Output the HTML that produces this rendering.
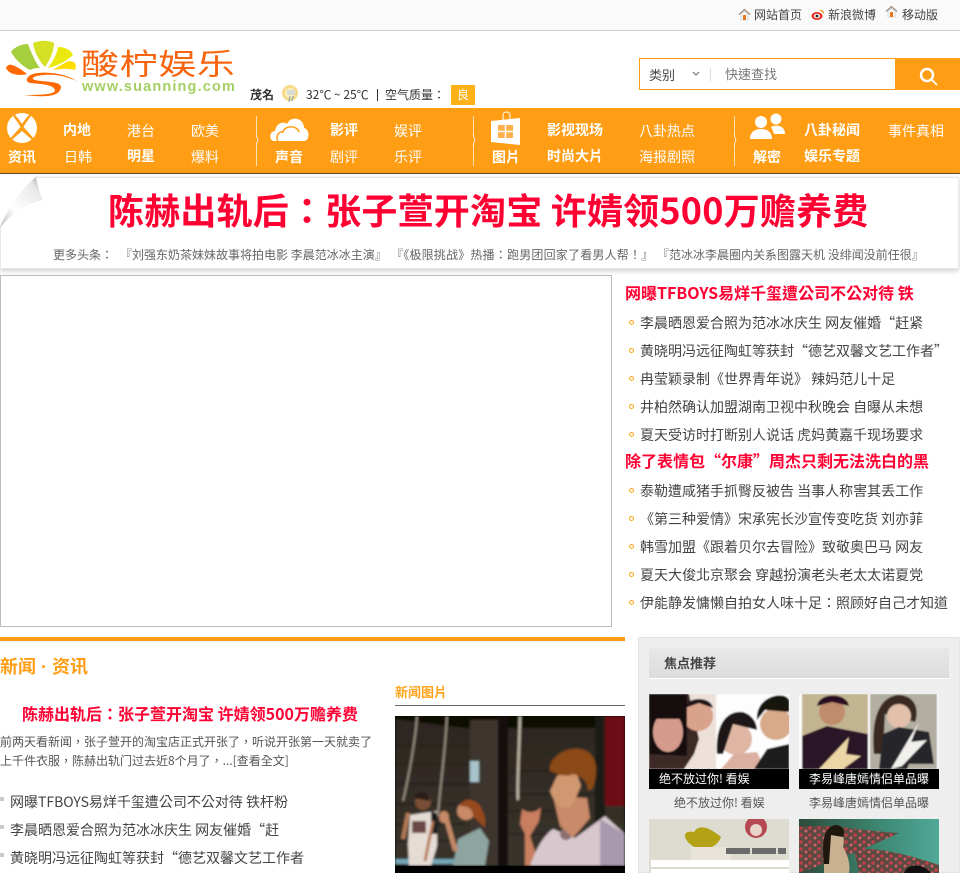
<!DOCTYPE html>
<html lang="zh-Hant"><head><meta charset="utf-8"><title>酸柠娱乐</title>
<style>
html,body{margin:0;padding:0;background:#fff}
body{width:960px;height:873px;position:relative;overflow:hidden;font-family:"Noto Sans CJK TC","Liberation Sans",sans-serif;color:#444;font-size:14px}
.t{position:absolute;white-space:nowrap;line-height:20px}
.b{position:absolute}
.n{color:#fff;font-size:14px}
.nb{color:#fff;font-size:14px;font-weight:bold}
.l{font-size:14px;color:#444}
.d{position:absolute;width:3px;height:3px;border:1px solid #ffa414;border-radius:50%;left:629px}
.s{position:absolute;left:0;width:4px;height:4px;background:#ccc}
.red{color:#ff0033;font-weight:bold}
svg{position:absolute;display:block}
</style></head><body>

<div class="b" style="left:0;top:0;width:960px;height:30px;background:#fafafa;border-bottom:1px solid #ccc"></div>
<svg style="left:738px;top:8px" width="13" height="13" viewBox="0 0 13 13"><path d="M1 6.500L6.500 1.500L12 6.500" fill="none" stroke="#a08a78" stroke-width="1.200"/><path d="M3 6.500V12H10V6.500L6.500 3.500Z" fill="#fff" stroke="#bbb" stroke-width=".6"/><rect x="5" y="7" width="3" height="5" fill="#e8741a"/></svg>
<div class="t" style="left:754px;top:5px;font-size:12px;color:#444">网站首页</div>
<svg style="left:811px;top:8px" width="14" height="13" viewBox="0 0 14 13"><ellipse cx="6" cy="8" rx="5.500" ry="4" fill="#e6362c"/><ellipse cx="6" cy="8" rx="3" ry="2.300" fill="#fff"/><circle cx="6" cy="8" r="1.400" fill="#222"/><path d="M9 2.500A3 3 0 0 1 12.500 5.500" fill="none" stroke="#f0a020" stroke-width="1.300"/></svg>
<div class="t" style="left:828px;top:5px;font-size:12px;color:#444">新浪微博</div>
<svg style="left:885px;top:5px" width="13" height="13" viewBox="0 0 13 13"><path d="M1 6.500L6.500 1.500L12 6.500" fill="none" stroke="#a08a78" stroke-width="1.200"/><path d="M3 6.500V12H10V6.500L6.500 3.500Z" fill="#fff" stroke="#bbb" stroke-width=".6"/><rect x="5" y="7" width="3" height="5" fill="#e8741a"/></svg>
<div class="t" style="left:902px;top:5px;font-size:12px;color:#444">移动版</div>

<svg style="left:5px;top:40px" width="75" height="58" viewBox="0 0 75 58">
<path d="M6 12C10 6 18 4 23 4C26 12 30 22 35 28C30 28 27 29 25 30C17 26 10 19 6 12Z" fill="#a5cf3c"/>
<path d="M28 3C35 0 44 0 49 3C49 12 44 21 40 27C34 21 29 11 28 3Z" fill="#d6e024"/>
<path d="M53 7C60 7 66 10 68 15C62 21 52 26 43 28C48 21 52 14 53 7Z" fill="#ebe80e"/>
<path d="M60 23C63 20 67 21 70 23C71 25 71 27 70 30C62 28 55 29 48 30C52 27 56 25 60 23Z" fill="#ffdc00"/>
<path d="M1 28C2 25 5 24 7 25C13 27 17 30 22 34C15 36 4 35 1 28Z" fill="#ff6a00"/>
<path d="M72 41C60 33 38 31 28 34C22 36 19 41 25 43C34 44 48 44 50 50C50 54 40 55 19 55C36 57 55 58 56 47C56 41 38 42 30 40C24 38 32 35 40 35C52 34 62 37 72 41Z" fill="#ff6a00"/>
</svg>
<div class="t" style="left:81px;top:35px;font-size:38px;line-height:44px;color:#f8650f;letter-spacing:.6px;transform:scaleY(.78);transform-origin:0 100%">酸柠娱乐</div>
<div class="t" style="left:82px;top:77px;font-family:'Liberation Sans',sans-serif;font-size:14.500px;color:#a5d065;letter-spacing:1.150px;font-weight:bold">www.suanning.com</div>

<div class="t" style="left:250px;top:85px;font-size:12px;font-weight:bold;color:#333">茂名</div>
<svg style="left:281px;top:84px" width="19" height="20" viewBox="0 0 19 20"><circle cx="9" cy="9" r="8" fill="#f6d98a"/><circle cx="9" cy="9" r="5" fill="#fbf0c0"/><path d="M6 6h8v5H6z" fill="#d8dcd8"/><path d="M9 12l-1 6M12 12l-1 5" stroke="#8fa8b0" stroke-width="1.200"/></svg>
<div class="t" style="left:306px;top:85px;font-size:12px;color:#333">32℃ ~ 25℃</div>
<div class="b" style="left:377px;top:89px;width:1px;height:12px;background:#333"></div>
<div class="t" style="left:385px;top:85px;font-size:12px;color:#333">空气质量：</div>
<div class="b" style="left:451px;top:85px;width:24px;height:20px;background:#ffb11a;color:#fff;font-size:12px;line-height:20px;text-align:center">良</div>

<div class="b" style="left:639px;top:58px;width:256px;height:30px;border:1px solid #ff9d14;background:#fff;box-sizing:content-box"></div>
<div class="t" style="left:649px;top:65px;font-size:13px;color:#444">类别</div>
<svg style="left:691px;top:70px" width="10" height="8" viewBox="0 0 10 8"><path d="M2 2L5 5L8 2" fill="none" stroke="#666"/></svg>
<div class="b" style="left:710px;top:68px;width:1px;height:13px;background:#ddd"></div>
<div class="t" style="left:725px;top:64px;font-size:13px;color:#777">快速查找</div>
<div class="b" style="left:895px;top:58px;width:65px;height:32px;background:#ff9d14"></div>
<svg style="left:917px;top:65px" width="24" height="24" viewBox="0 0 24 24"><circle cx="10" cy="10" r="6" fill="none" stroke="#fff" stroke-width="2.500"/><path d="M15 15L20 20" stroke="#fff" stroke-width="1.800"/></svg>

<div class="b" style="left:0;top:108px;width:960px;height:65px;background:#ff9d14;border-bottom:1px solid #5a4a30"></div>
<svg style="left:7px;top:113px" width="30" height="30" viewBox="0 0 30 30"><circle cx="15" cy="15" r="15" fill="#fff"/><path d="M8 2C11 5 13 8 15 11C17 8 19 5 22 2L24 3C21 7 18 11 16.500 14C20 18 24 22 27 26L25 27C21 23 17 20 15 18C13 20 9 23 5 27L3 26C6 22 10 18 13.500 14C12 11 9 7 6 3Z" fill="#ff9d14"/></svg>
<div class="t nb" style="left:8px;top:147px">资讯</div>
<div class="t nb" style="left:63px;top:120px">内地</div>
<div class="t n" style="left:127px;top:121px">港台</div>
<div class="t n" style="left:191px;top:121px">欧美</div>
<div class="t n" style="left:64px;top:147px">日韩</div>
<div class="t nb" style="left:127px;top:146px">明星</div>
<div class="t n" style="left:191px;top:147px">爆料</div>
<div class="b" style="left:256px;top:116px;width:1px;height:50px;background:#ffe0b0"></div>
<svg style="left:254px;top:134px" width="5" height="12" viewBox="0 0 5 12"><path d="M2 1L4 6L2 11" fill="#ff9d14" stroke="#fff" stroke-width=".8"/></svg>
<svg style="left:269px;top:115px" width="41" height="27" viewBox="0 0 41 27"><path d="M5 26C0 26 0 16 6 16C7 8 15 6 18 9C22 0 35 3 35 13C41 14 41 26 35 26Z" fill="#fff"/><path d="M9 26C6 22 10 16 14 17C16 10 28 10 30 17" fill="none" stroke="#ff9d14" stroke-width="1.500"/></svg>
<div class="t nb" style="left:275px;top:147px">声音</div>
<div class="t nb" style="left:330px;top:120px">影评</div>
<div class="t n" style="left:394px;top:121px">娱评</div>
<div class="t n" style="left:330px;top:147px">剧评</div>
<div class="t n" style="left:394px;top:147px">乐评</div>
<div class="b" style="left:473px;top:116px;width:1px;height:50px;background:#ffe0b0"></div>
<svg style="left:471px;top:134px" width="5" height="12" viewBox="0 0 5 12"><path d="M2 1L4 6L2 11" fill="#ff9d14" stroke="#fff" stroke-width=".8"/></svg>
<svg style="left:490px;top:110px" width="31" height="36" viewBox="0 0 31 36"><path d="M13 10V5C13 1 20 1 20 5V10" fill="none" stroke="#fff" stroke-width="1"/><path d="M1 11L30 8V35L1 32Z" fill="#fff"/><path d="M8 15H23V28H8Z" fill="#ffb04a"/><path d="M15.500 15V28M8 21.500H23" stroke="#fff" stroke-width="1.500"/></svg>
<div class="t nb" style="left:492px;top:147px">图片</div>
<div class="t nb" style="left:547px;top:120px">影视现场</div>
<div class="t n" style="left:639px;top:121px">八卦热点</div>
<div class="t nb" style="left:547px;top:146px">时尚大片</div>
<div class="t n" style="left:639px;top:147px">海报剧照</div>
<div class="b" style="left:734px;top:116px;width:1px;height:50px;background:#ffe0b0"></div>
<svg style="left:732px;top:134px" width="5" height="12" viewBox="0 0 5 12"><path d="M2 1L4 6L2 11" fill="#ff9d14" stroke="#fff" stroke-width=".8"/></svg>
<svg style="left:750px;top:113px" width="36" height="27" viewBox="0 0 36 27"><circle cx="11" cy="9" r="6" fill="#fff"/><circle cx="26" cy="6" r="5.500" fill="#fff"/><path d="M0 26C0 19 5 16 11 16C17 16 22 19 22 26Z" fill="#fff"/><path d="M21 14C27 11 35 13 35 21H24C23 18 22 16 21 14Z" fill="#fff"/></svg>
<div class="t nb" style="left:753px;top:147px">解密</div>
<div class="t nb" style="left:804px;top:120px">八卦秘闻</div>
<div class="t n" style="left:888px;top:121px">事件真相</div>
<div class="t nb" style="left:804px;top:146px">娱乐专题</div>

<div class="b" style="left:0;top:177px;width:959px;height:92px;background:#fff;border:1px solid #e8e8e8;box-shadow:0 2px 5px rgba(0,0,0,.2);box-sizing:border-box"></div>
<svg style="left:0;top:176px" width="46" height="52" viewBox="0 0 46 52"><defs><linearGradient id="pg" x1="0" y1="1" x2="1" y2="0"><stop offset="0" stop-color="#bbb"/><stop offset=".35" stop-color="#fff"/><stop offset=".8" stop-color="#e8e8e8"/><stop offset="1" stop-color="#999"/></linearGradient></defs><path d="M0 0H36L0 50Z" fill="#fff"/><path d="M36 1C38 12 40 18 43 24C28 27 12 36 0 52C4 38 20 14 36 1Z" fill="url(#pg)"/></svg>
<div class="t red" style="left:108px;top:187px;font-size:36px;line-height:44px;letter-spacing:.2px">陈赫出轨后：张子萱开淘宝 许婧领500万赡养费</div>
<div class="t" style="left:53px;top:245px;font-size:12px;color:#666">更多头条：</div>
<div class="t" style="left:120px;top:245px;font-size:12px;color:#666">『刘强东奶茶妹妹故事将拍电影 李晨范冰冰主演』</div>
<div class="t" style="left:391px;top:245px;font-size:12px;color:#666;letter-spacing:.2px">『《极限挑战》热播：跑男团回家了看男人帮！』</div>
<div class="t" style="left:657px;top:245px;font-size:12px;color:#666">『范冰冰李晨圈内关系图露天机 没绯闻没前任很』</div>

<div class="b" style="left:0;top:275px;width:612px;height:352px;border:1px solid #bbb;box-sizing:border-box;background:#fff"></div>

<div class="t red" style="left:625px;top:282px;font-size:16px">网曝TFBOYS易烊千玺遭公司不公对待 铁</div>
<div class="d" style="top:320px"></div><div class="t l" style="left:640px;top:313px">李晨晒恩爱合照为范冰冰庆生 网友催婚“赶紧</div>
<div class="d" style="top:348px"></div><div class="t l" style="left:640px;top:341px">黄晓明冯远征陶虹等获封“德艺双馨文艺工作者”</div>
<div class="d" style="top:376px"></div><div class="t l" style="left:640px;top:369px">冉莹颖录制《世界青年说》 辣妈范儿十足</div>
<div class="d" style="top:404px"></div><div class="t l" style="left:640px;top:397px">井柏然确认加盟湖南卫视中秋晚会 自曝从未想</div>
<div class="d" style="top:432px"></div><div class="t l" style="left:640px;top:425px">夏天受访时打断别人说话 虎妈黄嘉千现场要求</div>
<div class="t red" style="left:625px;top:450px;font-size:16px">除了表情包“尔康”周杰只剩无法洗白的黑</div>
<div class="d" style="top:488px"></div><div class="t l" style="left:640px;top:481px">泰勒遭咸猪手抓臀反被告 当事人称害其丢工作</div>
<div class="d" style="top:516px"></div><div class="t l" style="left:640px;top:509px">《第三种爱情》宋承宪长沙宣传变吃货 刘亦菲</div>
<div class="d" style="top:544px"></div><div class="t l" style="left:640px;top:537px">韩雪加盟《跟着贝尔去冒险》致敬奥巴马 网友</div>
<div class="d" style="top:572px"></div><div class="t l" style="left:640px;top:565px">夏天大俊北京聚会 穿越扮演老头老太太诺夏党</div>
<div class="d" style="top:600px"></div><div class="t l" style="left:640px;top:593px">伊能静发慵懒自拍女人味十足：照顾好自己才知道</div>

<div class="b" style="left:0;top:637px;width:625px;height:4px;background:#ff9d14"></div>
<div class="b" style="left:0;top:641px;width:625px;height:1px;background:#f2f2f2"></div>
<div class="t" style="left:0;top:656px;font-size:18px;font-weight:bold;color:#ff9d14">新闻<span style="font-family:'Liberation Sans',sans-serif"> · </span>资讯</div>
<div class="t red" style="left:22px;top:703px;font-size:16px">陈赫出轨后：张子萱开淘宝 许婧领500万赡养费</div>
<div class="t" style="left:0;top:732px;font-size:12px;color:#555">前两天看新闻，张子萱开的淘宝店正式开张了，听说开张第一天就卖了</div>
<div class="t" style="left:0;top:751px;font-size:12px;color:#555">上千件衣服，陈赫出轨门过去近8个月了，...[查看全文]</div>
<div class="s" style="top:797px"></div><div class="t l" style="left:10px;top:792px">网曝TFBOYS易烊千玺遭公司不公对待 铁杆粉</div>
<div class="s" style="top:825px"></div><div class="t l" style="left:10px;top:820px">李晨晒恩爱合照为范冰冰庆生 网友催婚“赶</div>
<div class="s" style="top:853px"></div><div class="t l" style="left:10px;top:848px">黄晓明冯远征陶虹等获封“德艺双馨文艺工作者</div>

<div class="t" style="left:395px;top:682px;font-size:13px;font-weight:bold;color:#ffa31a">新闻图片</div>
<div class="b" style="left:395px;top:705px;width:230px;height:1px;background:#666"></div>
<svg style="left:395px;top:716px" width="230" height="157" viewBox="0 0 230 157">
<defs><filter id="bl"><feGaussianBlur stdDeviation="1"/></filter><linearGradient id="wall" x1="0" y1="0" x2="0" y2="1"><stop offset="0" stop-color="#2c2620"/><stop offset="1" stop-color="#3a342c"/></linearGradient></defs>
<rect width="230" height="157" fill="#000"/>
<svg x="0" y="0" width="230" height="150" style="position:static">
<g filter="url(#bl)">
<rect width="230" height="150" fill="url(#wall)"/>
<path d="M0 0H205V12H70L0 3Z" fill="#0a0806"/>
<rect x="75" y="4" width="28" height="146" fill="#3d362d"/>
<rect x="103" y="0" width="10" height="150" fill="#14110e"/>
<rect x="200" y="0" width="10" height="150" fill="#1c1a16"/>
<rect x="210" y="0" width="20" height="90" fill="#6d0f14"/>
<path d="M0 30H75M0 48H75M0 68H75M0 88H70M0 108H70M0 125H70M113 55H200M113 78H200M113 95H190M113 118H200" stroke="#1b1713" stroke-width="1"/>
<rect x="75" y="45" width="9" height="21" fill="#a9c4cb"/>
<rect x="0" y="143" width="60" height="5" fill="#75a6b8"/>
<path d="M22 0C21 20 14 60 8 85M52 0C50 40 45 70 43 100" stroke="#9f9486" stroke-width="1.800" fill="none"/>
<path d="M125 0C124 40 122 70 123 84" stroke="#c2baa8" stroke-width="2.500" fill="none"/>
<circle cx="28" cy="86" r="8" fill="#7a5038"/><path d="M19 82C21 74 34 74 35 85" fill="#2a1a12"/>
<path d="M15 99L42 95L42 130L36 150H14L13 128Z" fill="#e6dcd6"/><path d="M36 95L42 97L42 118L36 118Z" fill="#1c1a1a"/><rect x="17" y="105" width="14" height="12" fill="#6a4a44"/>
<path d="M13 97L8 123" stroke="#b67b56" stroke-width="4"/>
<path d="M38 105L30 145" stroke="#b67b56" stroke-width="3"/>
<circle cx="71" cy="95" r="9" fill="#c88a68"/><path d="M65 90C68 80 84 82 88 96C91 102 90 108 90 112L78 100C78 92 72 90 65 90Z" fill="#96481e"/>
<path d="M58 150L63 123L85 112L94 125L90 150Z" fill="#8ea4a0"/>
<path d="M48 100L58 135L63 135L53 100Z" fill="#c48a68"/>
<ellipse cx="49" cy="101" rx="5" ry="6" fill="#c88a68"/>
<path d="M127 93C133 98 143 96 146 91L144 105L135 120L145 150H130V118L125 108Z" fill="#c87e5e"/>
<path d="M135 150C140 135 148 120 158 113L180 122L210 100L230 118V150Z" fill="#d8c8ce"/>
<path d="M205 103L230 118V150H205Z" fill="#a89aae"/>
<circle cx="171" cy="118" r="6" fill="#8a7070"/>
<path d="M158 80L165 110L178 122L195 102L192 82Z" fill="#c88a68"/>
<path d="M162 60L155 75C160 90 170 97 178 88L186 70L180 52Z" fill="#d09870"/>
<path d="M155 55C152 45 168 30 185 33C200 35 205 50 198 72L193 75C193 65 186 60 178 58C172 62 162 58 155 55Z" fill="#8a4812"/>
</g></svg></svg>

<div class="b" style="left:638px;top:637px;width:322px;height:236px;background:#eee;border:1px solid #e4e4e4;box-sizing:border-box"></div>
<div class="b" style="left:649px;top:648px;width:300px;height:30px;background:linear-gradient(#e8e8e8,#dcdcdc);border-bottom:1px solid #fff;box-sizing:content-box"></div>
<div class="t" style="left:664px;top:653px;font-size:13px;font-weight:bold;color:#444">焦点推荐</div>

<svg style="left:649px;top:694px" width="140" height="75" viewBox="0 0 140 75">
<defs><filter id="b2"><feGaussianBlur stdDeviation=".8"/></filter></defs>
<g filter="url(#b2)">
<rect width="140" height="75" fill="#fff"/>
<rect width="67" height="75" fill="#3c2b28"/>
<path d="M40 0H67V75H35L45 60L50 45Z" fill="#fff4ec" opacity=".9"/>
<circle cx="49" cy="22" r="15" fill="#d9a28a"/><path d="M36 14C38 2 62 2 64 14L50 9Z" fill="#1d1514"/>
<path d="M0 0H38V62L0 60Z" fill="#19100f"/><ellipse cx="19" cy="38" rx="15" ry="20" fill="#d49b8c"/><path d="M3 25C5 10 34 8 36 25Z" fill="#140c0c"/>
<rect x="67" width="73" height="75" fill="#fdfdfd"/>
<circle cx="87" cy="45" r="16" fill="#dfb6a4"/><path d="M68 60C66 30 78 16 94 18C106 22 108 32 108 36L84 30L74 60Z" fill="#1c1516"/>
<path d="M72 75L85 60L108 58L116 75Z" fill="#dcb0a0"/>
<circle cx="127" cy="30" r="16" fill="#d8aa8a"/><path d="M108 26C106 2 136 -4 140 6V18L116 16Z" fill="#17120f"/>
<path d="M105 75L118 55L140 50V75Z" fill="#1e1a1a"/>
</g></svg>
<div class="b" style="left:649px;top:769px;width:140px;height:20px;background:#000"></div>
<div class="t" style="left:659px;top:769px;font-size:12px;color:#fff">绝不放过你! 看娱</div>
<div class="t" style="left:674px;top:793px;font-size:12px;color:#555">绝不放过你! 看娱</div>

<svg style="left:799px;top:694px" width="140" height="75" viewBox="0 0 140 75">
<g filter="url(#b2)">
<rect width="140" height="75" fill="#fff"/>
<rect x="3" width="66" height="75" fill="#c3b592"/>
<rect x="71" width="67" height="75" fill="#b2aea2"/>
<path d="M3 75V42L28 32L69 40V75Z" fill="#2c1228"/>
<path d="M20 75L50 43L47 60L62 62L44 75Z" fill="#ecd6a6"/>
<circle cx="33" cy="18" r="13" fill="#bf8c6c"/><path d="M18 12C20 -2 48 -2 50 12L33 8Z" fill="#2a0f22"/>
<path d="M75 60C72 30 78 2 100 1C118 2 120 18 116 28L86 20L84 60Z" fill="#3a2a20"/>
<circle cx="100" cy="22" r="12" fill="#e2c0aa"/>
<path d="M80 75L84 40L100 33L130 38L135 70H110L108 75Z" fill="#27262a"/>
<path d="M92 75L120 28L112 48L128 46L103 72Z" fill="#f2f0ec"/>
</g></svg>
<div class="b" style="left:799px;top:769px;width:140px;height:20px;background:#000"></div>
<div class="t" style="left:809px;top:769px;font-size:12px;color:#fff">李易峰唐嫣情侣单品曝</div>
<div class="t" style="left:809px;top:793px;font-size:12px;color:#555">李易峰唐嫣情侣单品曝</div>

<svg style="left:649px;top:819px" width="140" height="54" viewBox="0 0 140 54">
<rect width="140" height="54" fill="#dedbd0"/>
<path d="M50 30C35 25 30 10 45 13C50 5 60 8 72 18C70 25 60 32 50 30Z" fill="#b4a216"/>
<rect x="42" y="28" width="40" height="14" fill="#e8e4da"/>
<circle cx="107" cy="8" r="11" fill="#b64a54"/><circle cx="107" cy="11" r="6" fill="#e8d4c8"/>
<rect x="77" y="29" width="24" height="6" fill="#6a6a6a"/><rect x="103" y="29" width="24" height="6" fill="#6a6a6a"/><rect x="129" y="29" width="8" height="6" fill="#6a6a6a"/>
<rect x="2" y="41" width="138" height="7" fill="#fff"/><rect x="2" y="50" width="138" height="4" fill="#fff"/>
</svg>
<svg style="left:799px;top:819px" width="140" height="54" viewBox="0 0 140 54">
<defs><linearGradient id="wt" x1="0" y1="0" x2="1" y2="0"><stop offset="0" stop-color="#2d4a3a"/><stop offset=".6" stop-color="#3d8a74"/><stop offset="1" stop-color="#50a898"/></linearGradient><pattern id="pt" width="9" height="7" patternUnits="userSpaceOnUse"><rect width="9" height="7" fill="#5a4a40"/><circle cx="2" cy="2" r="1.800" fill="#c0404a"/><circle cx="7" cy="5" r="1.500" fill="#d0606a"/></pattern></defs>
<rect width="140" height="54" fill="url(#wt)"/>
<path d="M0 8C30 4 60 12 100 14C70 28 40 40 0 54Z" fill="url(#pt)"/>
<path d="M55 30C80 28 110 36 140 46V54H60Z" fill="url(#pt)"/>
<path d="M25 54V28C25 20 28 10 36 10C45 12 46 22 44 28C48 34 52 46 50 54Z" fill="#c8b090"/>
<path d="M25 45C22 20 26 6 38 6C46 8 46 14 44 18L32 16L30 45Z" fill="#20180e"/>
<path d="M105 54C108 46 118 44 128 50L132 54Z" fill="#121010"/>
</svg>

</body></html>
